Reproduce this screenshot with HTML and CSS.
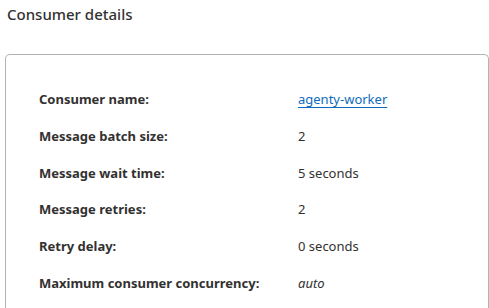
FILE: index.html
```html
<!DOCTYPE html>
<html lang="en">

<head>
    <meta charset="UTF-8">
    <meta name="viewport" content="width=device-width, initial-scale=1.0">
    <title>Consumer details</title>
    <link rel="stylesheet" href="styles.css">
</head>

<body>

    <h2 class="section-title">Consumer details</h2>

    <div class="details-card">
        <dl class="details-list">
            <dt>Consumer name:</dt>
            <dd><a href="#">agenty-worker</a></dd>

            <dt>Message batch size:</dt>
            <dd>2</dd>

            <dt>Message wait time:</dt>
            <dd>5 seconds</dd>

            <dt>Message retries:</dt>
            <dd>2</dd>

            <dt>Retry delay:</dt>
            <dd>0 seconds</dd>

            <dt>Maximum consumer concurrency:</dt>
            <dd><em>auto</em></dd>
        </dl>
    </div>

</body>

</html>
```

FILE: styles.css
```css
body {
    font-family: 'Noto Sans', 'Open Sans', sans-serif;
    background-color: #ffffff;
    color: #323130;
    margin: 0;
    padding: 4px 0 0 7px;
    overflow: hidden;
}

.section-title {
    margin: 0;
    font-size: 15px;
    font-weight: 500;
    line-height: 20px;
    color: #323130;
}

/* Card (bottom runs out of view) */
.details-card {
    margin: 30px 0 0 -2px;
    height: 218px;
    border: 1px solid #b3b3b3;
    border-bottom: none;
    border-radius: 5px 5px 0 0;
    padding: 35px 0 0 33px;
}

.details-list {
    display: grid;
    grid-template-columns: 259px auto;
    row-gap: 18.8px;
    margin: 0;
    font-size: 13px;
    line-height: 18px;
}

.details-list dt {
    font-weight: bold;
}

.details-list dd {
    margin: 0;
}

.details-list a {
    color: #0f6cbd;
    text-decoration: underline;
    text-underline-offset: 3px;
}
```
